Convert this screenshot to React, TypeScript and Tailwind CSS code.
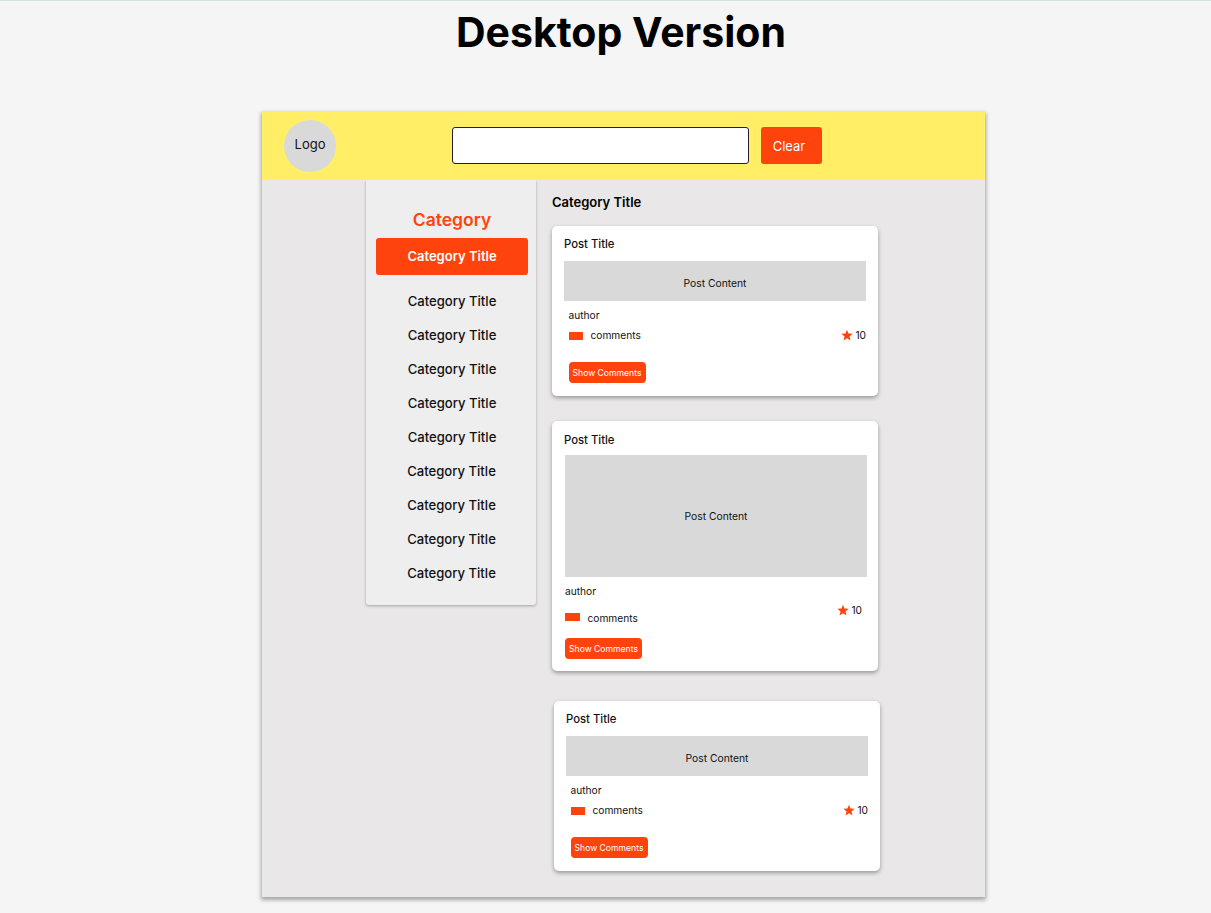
const categories = [
  "ml-0",
  "ml-0",
  "ml-0",
  "ml-0",
  "ml-0",
  "-ml-px",
  "-ml-px",
  "-ml-px",
  "-ml-px",
];

function Star() {
  return (
    <svg viewBox="0 0 24 24" className="mb-px h-3 w-3 shrink-0 fill-[#ff430d]">
      <path d="M12 1.5l3 7.6 8.2.5-6.3 5.2 2.1 8-7-4.4-7 4.4 2.1-8L.8 9.6 9 9.1z" />
    </svg>
  );
}

function ShowComments() {
  return (
    <button className="block h-[21px] w-[77px] rounded-[4px] bg-[#ff430d] pt-[2px] text-[8.6px] leading-[19px] text-white">
      Show Comments
    </button>
  );
}

function Meta({ count }: { count: number }) {
  return (
    <div className="flex items-center text-[10.2px] leading-[14px] text-[#111]">
      <span className="mt-[2px] h-2 w-[14.5px] bg-[#ff430d]" />
      <span className="ml-[7.5px] flex-1">comments</span>
      <Star />
      <span className="ml-[2px]">{count}</span>
    </div>
  );
}

function ShortPost({ className }: { className: string }) {
  return (
    <article className={`h-[170px] w-[326px] rounded-[5px] bg-white px-3 pt-[11px] shadow-[0_2px_4px_rgba(0,0,0,0.35)] ${className}`}>
      <h3 className="text-[11.3px] leading-[15px] font-[450] text-[#111]">Post Title</h3>
      <div className="mt-[9px] flex h-10 w-[302px] items-center justify-center bg-[#d9d9d9] pt-[5px] text-[10.3px] text-[#111]">
        Post Content
      </div>
      <div className="pl-[4.5px]">
        <p className="mt-[7px] text-[10.2px] leading-[14px] text-[#111]">author</p>
        <div className="mt-[6px]">
          <Meta count={10} />
        </div>
        <div className="mt-[20px]">
          <ShowComments />
        </div>
      </div>
    </article>
  );
}

function TallPost() {
  return (
    <article className="mt-[25px] h-[250px] w-[326px] rounded-[5px] bg-white px-3 pt-[12px] shadow-[0_2px_4px_rgba(0,0,0,0.35)]">
      <h3 className="text-[11.3px] leading-[15px] font-[450] text-[#111]">Post Title</h3>
      <div className="mt-[7px] ml-px flex h-[122px] w-[302px] items-center justify-center bg-[#d9d9d9] pt-[2px] text-[10.3px] text-[#111]">
        Post Content
      </div>
      <div className="pl-px">
        <p className="mt-[7px] text-[10.2px] leading-[14px] text-[#111]">author</p>
        <div className="mt-[5px] flex items-start justify-between">
          <div className="mt-[8px] flex items-center text-[10.2px] leading-[14px] text-[#111]">
            <span className="mt-[-2px] h-2 w-[15px] bg-[#ff430d]" />
            <span className="ml-[7.5px]">comments</span>
          </div>
          <div className="mr-[4px] flex items-center text-[10.2px] leading-[14px] text-[#111]">
            <Star />
            <span className="ml-[2px]">10</span>
          </div>
        </div>
        <div className="mt-[13px]">
          <ShowComments />
        </div>
      </div>
    </article>
  );
}

export default function App() {
  return (
    <div className="min-h-[913px] border-t border-[#d5e3df] bg-[#f5f5f5] font-['Inter',sans-serif] text-black">
      <h1 className="h-[111px] pl-[31px] text-center text-[41px] leading-[62px] font-bold">Desktop Version</h1>

      <div className="ml-[262px] h-[785px] w-[723px] bg-[#e9e7e7] shadow-[0_2px_4px_1px_rgba(0,0,0,0.33)]">
        <header className="relative z-10 flex h-[68px] items-center bg-[#ffee66] pl-[22px]">
          <div className="flex h-[52px] w-[52px] items-center justify-center rounded-full bg-[#d9d9d9] pb-[3px] text-[13px] text-[#111]">
            Logo
          </div>
          <input
            aria-label="Search"
            className="mb-[2px] ml-[116px] h-[37px] w-[297px] rounded-[3px] border border-[#222] bg-white"
          />
          <button className="mb-[2px] ml-3 h-[37px] w-[61px] rounded-[3px] bg-[#ff430d] pt-[3px] pr-[5px] text-[13px] text-white">
            Clear
          </button>
        </header>

        <div className="flex pl-[104px]">
          <aside className="flex h-[425px] w-[170px] flex-col items-center rounded-b-[3px] bg-[#eeeeee] pr-2 pl-[10px] shadow-[0_1px_3px_rgba(0,0,0,0.3)]">
            <h2 className="mt-[28px] text-[17.5px] leading-[24px] font-semibold text-[#ff430d]">Category</h2>
            <button className="mt-[6px] h-[37px] w-[152px] rounded-[3px] bg-[#ff430d] text-[13px] font-semibold text-white">
              Category Title
            </button>
            <ul className="mt-[9px] flex flex-col items-center">
              {categories.map((offset, i) => (
                <li key={i} className={`h-[34px] text-[13.1px] leading-[34px] font-[450] text-[#111] ${offset}`}>
                  Category Title
                </li>
              ))}
            </ul>
          </aside>

          <main className="ml-4 w-[328px]">
            <h2 className="mt-[13px] text-[13px] leading-[18px] font-semibold">Category Title</h2>
            <ShortPost className="mt-[15px]" />
            <TallPost />
            <ShortPost className="mt-[30px] ml-[2px]" />
          </main>
        </div>
      </div>
    </div>
  );
}
